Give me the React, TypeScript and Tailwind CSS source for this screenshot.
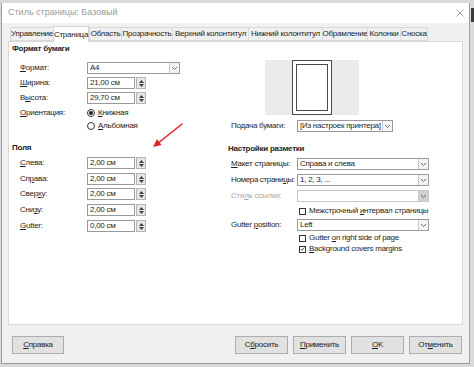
import React from "react";

const A = ({ t, i }: { t: string; i?: number }) =>
  i === undefined ? (
    <>{t}</>
  ) : (
    <>
      {t.slice(0, i)}
      <span className="underline underline-offset-[1px]">{t[i]}</span>
      {t.slice(i + 1)}
    </>
  );

function Chevron() {
  return (
    <svg width="7" height="5" viewBox="0 0 7 5">
      <polyline points="1,1 3.5,3.5 6,1" fill="none" stroke="#606060" strokeWidth="0.9" />
    </svg>
  );
}

function Combo({ value, w, disabled }: { value: string; w: string; disabled?: boolean }) {
  return (
    <div className={`flex h-[12px] border ${disabled ? "border-[#c8c8c8]" : "border-[#9a9a9a]"} bg-white ${w}`}>
      <div className="flex-1 pl-[2px] leading-[10px] whitespace-nowrap overflow-hidden">{value}</div>
      <div
        className={`w-[10px] flex items-center justify-center border-l ${
          disabled ? "border-[#c8c8c8] bg-[#cfcfcf]" : "border-[#c8c8c8] bg-[#f4f4f4]"
        }`}
      >
        <Chevron />
      </div>
    </div>
  );
}

function Spin({ value }: { value: string }) {
  return (
    <div className="flex h-[12px]">
      <div className="w-[48px] border border-[#9a9a9a] bg-white pl-[2px] leading-[10px]">{value}</div>
      <div className="w-[10px] ml-[1px] border border-[#b4b4b4] bg-[#e6e6e6] flex flex-col items-center justify-center gap-[1px]">
        <svg width="5" height="3" viewBox="0 0 5 3">
          <polygon points="0,3 2.5,0 5,3" fill="#404040" />
        </svg>
        <svg width="5" height="3" viewBox="0 0 5 3">
          <polygon points="0,0 2.5,3 5,0" fill="#404040" />
        </svg>
      </div>
    </div>
  );
}

function Radio({ checked }: { checked?: boolean }) {
  return (
    <div className="w-[8px] h-[8px] rounded-full border border-[#333] bg-white flex items-center justify-center">
      {checked && <div className="w-[4px] h-[4px] rounded-full bg-[#222]" />}
    </div>
  );
}

function Check({ checked }: { checked?: boolean }) {
  return (
    <div className="w-[7px] h-[7px] border border-[#333] bg-white flex items-center justify-center">
      {checked && (
        <svg width="6" height="6" viewBox="0 0 6 6">
          <polyline points="0.8,3 2.3,4.6 5.3,1" fill="none" stroke="#222" strokeWidth="0.9" />
        </svg>
      )}
    </div>
  );
}

const tabs: { t: string; w: string; sel?: boolean }[] = [
  { t: "Управление", w: "w-[43px]" },
  { t: "Страница", w: "w-[36px]", sel: true },
  { t: "Область", w: "w-[32px]" },
  { t: "Прозрачность", w: "w-[51px]" },
  { t: "Верхний колонтитул", w: "w-[76px]" },
  { t: "Нижний колонтитул", w: "w-[74px]" },
  { t: "Обрамление", w: "w-[45px]" },
  { t: "Колонки", w: "w-[33px]" },
  { t: "Сноска", w: "w-[28px]" },
];

function LRow({ label, children, mt }: { label: React.ReactNode; children: React.ReactNode; mt: string }) {
  return (
    <div className={`flex items-center h-[12px] ${mt}`}>
      <div className="w-[75px] pl-[8px] leading-[10px]">{label}</div>
      {children}
    </div>
  );
}

function RRow({
  label,
  children,
  mt,
  gray,
}: {
  label: React.ReactNode;
  children: React.ReactNode;
  mt: string;
  gray?: boolean;
}) {
  return (
    <div className={`flex items-center h-[12px] ${mt}`}>
      <div className={`w-[69px] pl-[3px] leading-[10px] whitespace-nowrap ${gray ? "text-[#a8a8a8]" : ""}`}>{label}</div>
      {children}
    </div>
  );
}

function CRow({ label, checked, mt }: { label: React.ReactNode; checked?: boolean; mt: string }) {
  return (
    <div className={`flex items-center h-[10px] ${mt} pl-[71px]`}>
      <Check checked={checked} />
      <div className="ml-[3px] leading-[10px] whitespace-nowrap">{label}</div>
    </div>
  );
}

function Btn({ children, w }: { children: React.ReactNode; w: string }) {
  return (
    <div className={`h-[18px] ${w} border border-[#adadad] bg-[#e1e1e1] flex items-center justify-center`}>
      {children}
    </div>
  );
}

export default function App() {
  return (
    <div className="w-[474px] h-[367px] bg-[#dadada] relative overflow-hidden pt-[3px] pl-[1px] text-[8px] tracking-[-0.25px] text-[#1e1e1e] [font-family:'Liberation_Sans',Arial,sans-serif]">
      <div className="absolute right-0 top-[8px] w-[3px] h-[14px] bg-[#3c3c3c]" />
      <div className="w-[469px] h-[361px] border border-t-0 border-[#9c9c9c] bg-[#f0f0f0] flex flex-col">
        {/* title bar */}
        <div className="h-[20px] bg-white flex items-center pl-[6px] pr-[4px]">
          <div className="flex-1 text-[9px] tracking-normal text-[#9a9a9a]">Стиль страницы: Базовый</div>
          <svg width="8" height="8" viewBox="0 0 8 8" className="mr-[1px]">
            <path d="M0.5 0.5 L7.5 7.5 M7.5 0.5 L0.5 7.5" stroke="#8a8a8a" strokeWidth="0.8" />
          </svg>
        </div>
        {/* tabs */}
        <div className="flex items-end h-[18px] pl-[8px] relative z-10">
          {tabs.map((tb) =>
            tb.sel ? (
              <div
                key={tb.t}
                className={`${tb.w} h-[16px] -mb-[1px] bg-white border border-b-0 border-[#d4d4d4] flex items-center justify-center whitespace-nowrap`}
              >
                {tb.t}
              </div>
            ) : (
              <div
                key={tb.t}
                className={`${tb.w} h-[14px] bg-[#f0f0f0] border border-r-0 border-[#d9d9d9] flex items-center justify-center whitespace-nowrap last:border-r`}
              >
                {tb.t}
              </div>
            )
          )}
        </div>
        {/* panel */}
        <div className="ml-[6px] w-[455px] h-[284px] bg-white border border-[#d9d9d9] flex">
          {/* left column */}
          <div className="w-[219px] pl-[3px] flex flex-col">
            <div className="h-[11px] mt-[1px] font-bold leading-[11px]">Формат бумаги</div>
            <LRow mt="mt-[8px]" label={<A t="Формат:" i={0} />}>
              <Combo value="A4" w="w-[93px]" />
            </LRow>
            <LRow mt="mt-[3px]" label={<A t="Ширина:" i={0} />}>
              <Spin value="21,00 см" />
            </LRow>
            <LRow mt="mt-[3px]" label={<A t="Высота:" i={1} />}>
              <Spin value="29,70 см" />
            </LRow>
            <div className="flex items-center h-[11px] mt-[3px]">
              <div className="w-[75px] pl-[8px] leading-[10px]">
                <A t="Ориентация:" i={0} />
              </div>
              <Radio checked />
              <div className="ml-[3px] leading-[10px]">
                <A t="Книжная" i={0} />
              </div>
            </div>
            <div className="flex items-center h-[11px] mt-[2px] pl-[75px]">
              <Radio />
              <div className="ml-[3px] leading-[10px]">
                <A t="Альбомная" i={0} />
              </div>
            </div>
            <div className="h-[11px] mt-[11px] font-bold leading-[11px]">Поля</div>
            <LRow mt="mt-[4px]" label={<A t="Слева:" i={0} />}>
              <Spin value="2,00 см" />
            </LRow>
            <LRow mt="mt-[4px]" label={<A t="Справа:" i={2} />}>
              <Spin value="2,00 см" />
            </LRow>
            <LRow mt="mt-[3px]" label={<A t="Сверху:" i={4} />}>
              <Spin value="2,00 см" />
            </LRow>
            <LRow mt="mt-[4px]" label={<A t="Снизу:" i={3} />}>
              <Spin value="2,00 см" />
            </LRow>
            <LRow mt="mt-[4px]" label={<A t="Gutter:" i={0} />}>
              <Spin value="0,00 см" />
            </LRow>
          </div>
          {/* right column */}
          <div className="flex-1 flex flex-col">
            <div className="ml-[37px] mt-[18px] w-[94px] h-[55px] bg-[#ebebeb] flex justify-center">
              <div className="w-[40px] h-[55px] border border-[#4a4a4a] bg-white p-[3px]">
                <div className="w-full h-full border border-[#4a4a4a]" />
              </div>
            </div>
            <RRow mt="mt-[5px]" label="Подача бумаги:">
              <Combo value="[Из настроек принтера]" w="w-[96px]" />
            </RRow>
            <div className="h-[11px] mt-[11px] font-bold leading-[11px]">Настройки разметки</div>
            <RRow mt="mt-[4px]" label={<A t="Макет страницы:" i={0} />}>
              <Combo value="Справа и слева" w="w-[132px]" />
            </RRow>
            <RRow mt="mt-[4px]" label={<span className="tracking-[-0.35px]"><A t="Номера страницы:" i={13} /></span>}>
              <Combo value="1, 2, 3, ..." w="w-[132px]" />
            </RRow>
            <RRow mt="mt-[4px]" gray label={<A t="Стиль ссылки:" i={3} />}>
              <Combo value="" w="w-[132px]" disabled />
            </RRow>
            <CRow mt="mt-[4px]" label={<A t="Межстрочный интервал страницы" i={12} />} />
            <RRow mt="mt-[3px]" label={<A t="Gutter position:" i={7} />}>
              <Combo value="Left" w="w-[132px]" />
            </RRow>
            <CRow mt="mt-[2px]" label={<A t="Gutter on right side of page" i={7} />} />
            <CRow mt="mt-[1px]" checked label={<A t="Background covers margins" i={0} />} />
          </div>
        </div>
        {/* buttons */}
        <div className="flex mt-[11px] pl-[10px]">
          <Btn w="w-[52px]">
            <A t="Справка" i={0} />
          </Btn>
          <div className="w-[171px]" />
          <div className="flex gap-[5px]">
            <Btn w="w-[53px]">
              <A t="Сбросить" i={1} />
            </Btn>
            <Btn w="w-[53px]">
              <A t="Применить" i={0} />
            </Btn>
            <Btn w="w-[53px]">
              <A t="OK" i={0} />
            </Btn>
            <Btn w="w-[53px]">
              <A t="Отменить" i={2} />
            </Btn>
          </div>
        </div>
      </div>
      {/* red annotation arrow */}
      <svg className="absolute left-[148px] top-[120px]" width="40" height="32" viewBox="0 0 40 32">
        <line x1="34" y1="4" x2="9" y2="24" stroke="#e02424" strokeWidth="1.6" strokeLinecap="round" />
        <polygon points="5,27 9,19 13.5,25" fill="#e02424" />
      </svg>
    </div>
  );
}
